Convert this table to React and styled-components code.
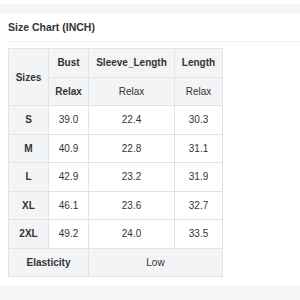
import React from 'react'
import styled, { createGlobalStyle } from 'styled-components'

const GlobalStyle = createGlobalStyle`
  html, body {
    margin: 0;
    padding: 0;
    background: #f5f6f8;
  }
  body {
    font-family: 'Liberation Sans', Arial, sans-serif;
    color: #333;
  }
`

const Page = styled.div`
  width: 300px;
  height: 300px;
  overflow: hidden;
  background: #f5f6f8;
  display: flex;
  flex-direction: column;
`

const TopCap = styled.div`
  height: 4px;
  background: #ffffff;
`

const Gap = styled.div`
  height: 10px;
  flex-shrink: 0;
`

const Card = styled.section`
  background: #ffffff;
  padding: 0 0 9px 8px;
`

const Title = styled.h3`
  margin: 0;
  height: 27px;
  line-height: 27px;
  font-size: 10.5px;
  font-weight: bold;
  color: #333;
  border-bottom: 1px solid #eeeff1;
`

const Table = styled.table`
  margin-top: 6px;
  border-collapse: collapse;
  table-layout: fixed;
  width: 214px;
  height: 229px;
  font-size: 10px;
  color: #333;
`

const Cell = styled.td`
  border: 1px solid #e2e3e5;
  text-align: center;
  vertical-align: middle;
  padding: 0;
  font-weight: ${(props) => (props.bold ? 'bold' : 'normal')};
  background: ${(props) => (props.shade ? '#f3f4f6' : '#ffffff')};
`

const columns = [40, 40, 86, 48]

const rows = [
  ['S', '39.0', '22.4', '30.3'],
  ['M', '40.9', '22.8', '31.1'],
  ['L', '42.9', '23.2', '31.9'],
  ['XL', '46.1', '23.6', '32.7'],
  ['2XL', '49.2', '24.0', '33.5'],
]

const App = () =>
  <Page>
    <GlobalStyle />
    <TopCap />
    <Gap />
    <Card>
      <Title>Size Chart (INCH)</Title>
      <Table>
        <colgroup>
          {columns.map((w, i) => <col key={i} style={{ width: w }} />)}
        </colgroup>
        <tbody>
          <tr>
            <Cell as="th" rowSpan={2} bold shade>Sizes</Cell>
            <Cell as="th" bold shade>Bust</Cell>
            <Cell as="th" bold shade>Sleeve_Length</Cell>
            <Cell as="th" bold shade>Length</Cell>
          </tr>
          <tr>
            <Cell bold shade>Relax</Cell>
            <Cell shade>Relax</Cell>
            <Cell shade>Relax</Cell>
          </tr>
          {rows.map(([size, ...values]) =>
            <tr key={size}>
              <Cell bold shade>{size}</Cell>
              {values.map((v, i) => <Cell key={i}>{v}</Cell>)}
            </tr>
          )}
          <tr>
            <Cell colSpan={2} bold shade>Elasticity</Cell>
            <Cell colSpan={2} shade>Low</Cell>
          </tr>
        </tbody>
      </Table>
    </Card>
  </Page>

export default App
